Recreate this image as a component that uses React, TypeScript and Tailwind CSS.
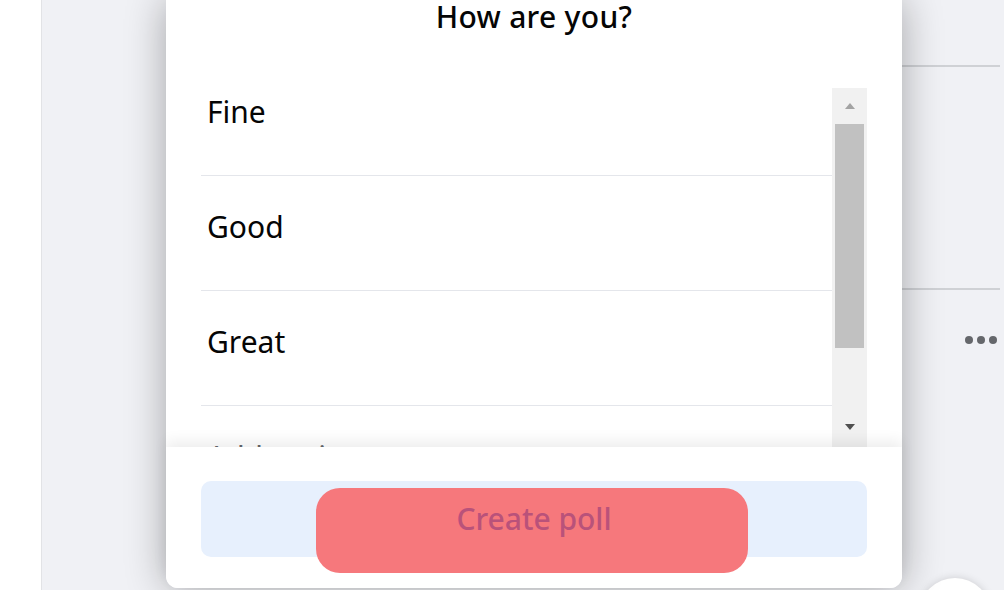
import React from "react";

const font = { fontFamily: '"Noto Sans", "Open Sans", sans-serif' };

function Row({ label, muted = false }: { label: string; muted?: boolean }) {
  return (
    <div className="h-[115px] shrink-0 border-b border-[#e4e6eb] pt-[31px]">
      <div className={`pl-[6px] text-[30px] leading-[40px] ${muted ? "text-[#65676b]" : "text-[#050505]"}`}>
        {label}
      </div>
    </div>
  );
}

export default function App() {
  return (
    <div className="relative flex h-[590px] w-[1004px] overflow-hidden bg-white" style={font}>
      <div className="w-[41px] shrink-0 bg-white" />
      <div className="flex flex-1 border-l border-[#e2e3e6] bg-[#f0f1f5]">
        <div className="w-[124px] shrink-0" />
        <div className="relative z-10 flex h-[588px] w-[736px] shrink-0 flex-col rounded-b-[12px] bg-white shadow-[0_0_40px_rgba(0,0,0,0.32)]">
          <div className="h-[61px] shrink-0 text-center text-[30px] font-medium leading-[33px] tracking-[0.3px] text-[#050505]">
            How are you?
          </div>
          <div className="flex h-[386px] shrink-0 px-[35px]">
            <div className="flex flex-1 flex-col overflow-hidden">
              <Row label="Fine" />
              <Row label="Good" />
              <Row label="Great" />
              <Row label="Add option" muted />
            </div>
            <div className="mt-[27px] flex h-[359px] w-[35px] shrink-0 flex-col items-center bg-[#f1f1f1]">
              <div className="flex h-[36px] w-full items-center justify-center">
                <svg width="12" height="8" viewBox="0 0 12 8">
                  <path d="M6 1 L11 7 L1 7 Z" fill="#a3a3a3" />
                </svg>
              </div>
              <div className="h-[224px] w-[29px] bg-[#c1c1c1]" />
              <div className="flex-1" />
              <div className="flex h-[42px] w-full items-start justify-center pt-[18px]">
                <svg width="12" height="8" viewBox="0 0 12 8">
                  <path d="M1 1 L11 1 L6 7 Z" fill="#505050" />
                </svg>
              </div>
            </div>
          </div>
          <div className="relative flex-1 rounded-b-[12px] bg-white px-[35px] pt-[34px] shadow-[0_-6px_14px_rgba(0,0,0,0.07)]">
            <div className="relative flex h-[76px] items-center justify-center rounded-[10px] bg-[#e7f0fd]">
              <div className="absolute left-[115px] top-[7px] h-[85px] w-[432px] rounded-[24px] bg-[#f6787c]" />
              <span className="relative text-[30px] font-medium leading-[40px] text-[#b9527a]">Create poll</span>
            </div>
          </div>
        </div>
        <div className="flex flex-1 flex-col pr-[4px]">
          <div className="mt-[65px] h-[2px] bg-[#cfd1d5]" />
          <div className="mt-[221px] h-[2px] bg-[#cfd1d5]" />
          <div className="mt-[46px] flex justify-end gap-[4px] pr-[3px]">
            <span className="h-[8px] w-[8px] rounded-full bg-[#65676b]" />
            <span className="h-[8px] w-[8px] rounded-full bg-[#65676b]" />
            <span className="h-[8px] w-[8px] rounded-full bg-[#65676b]" />
          </div>
        </div>
      </div>
      <div className="absolute left-[919px] top-[578px] h-[72px] w-[72px] rounded-full bg-white shadow-[0_0_8px_rgba(0,0,0,0.15)]" />
    </div>
  );
}
